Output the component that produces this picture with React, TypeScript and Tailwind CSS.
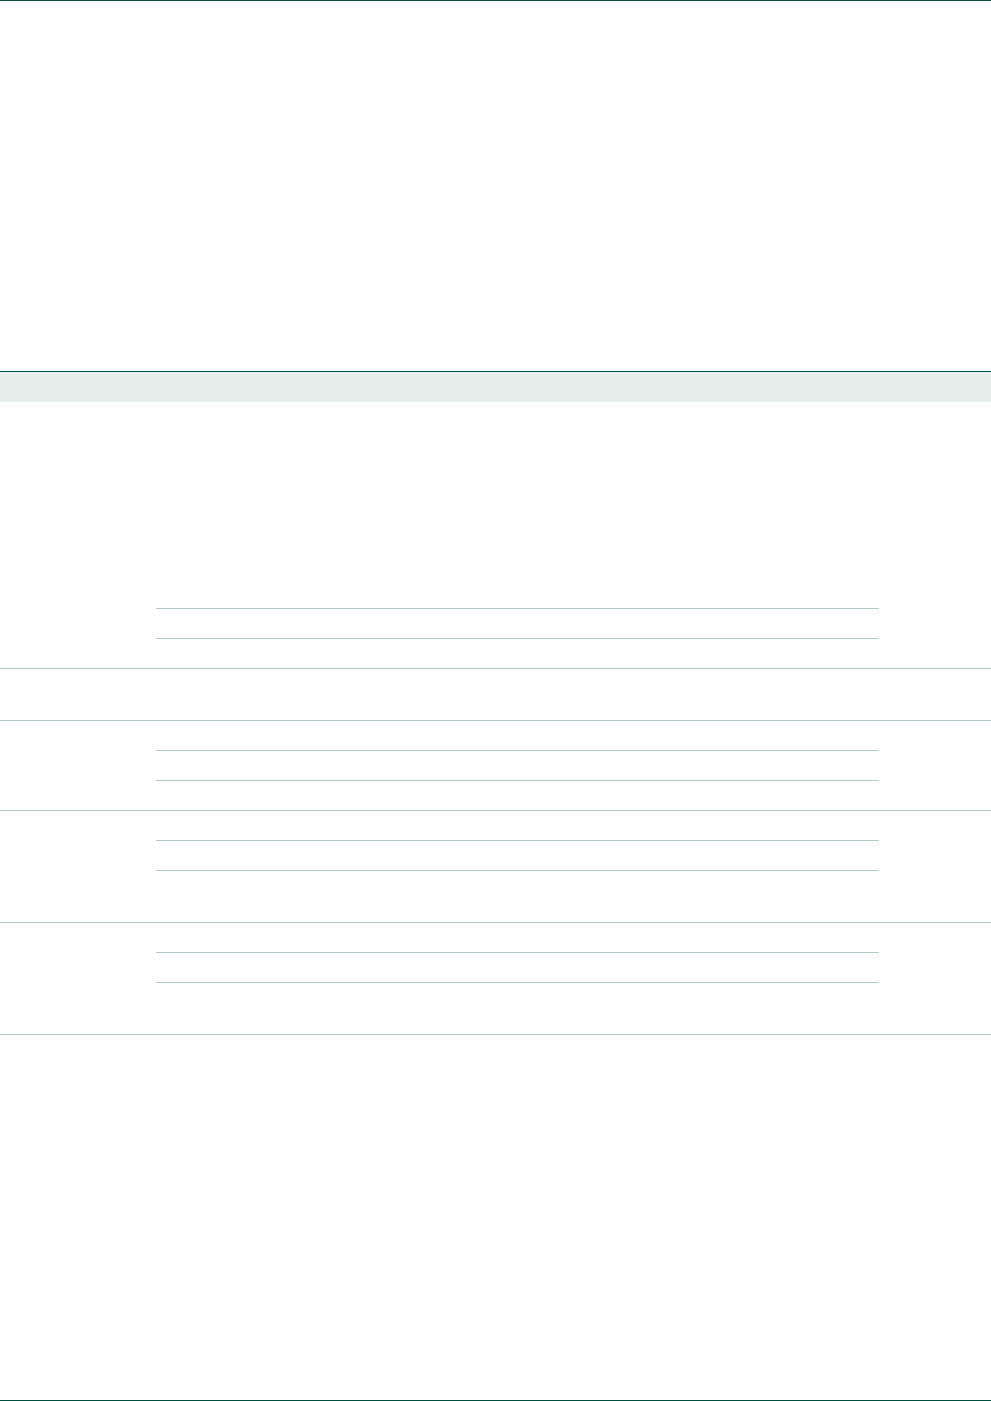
import React from "react";

// Empty tariff table: a header block, a tinted caption band and five grouped rows.
// Each group holds a stack of sub-cells in the middle column.

interface Group {
  cells: number[];
}

const groups: Group[] = [
  { cells: [206, 29, 29] },
  { cells: [51] },
  { cells: [29, 29, 29] },
  { cells: [29, 29, 51] },
  { cells: [29, 29, 51] },
];

const Row: React.FC<Group> = ({ cells }) => {
  return (
    <div className="flex border-b border-[#b3cbc5]">
      <div className="w-[156px] shrink-0" />
      <div className="flex w-[723px] shrink-0 flex-col divide-y divide-[#b3cbc5]">
        {cells.map((h, i) => (
          <div key={i} className="box-content" style={{ height: h }} />
        ))}
      </div>
      <div className="flex-1" />
    </div>
  );
};

export default function App() {
  return (
    <div className="flex min-h-[1401px] w-full flex-col bg-white font-['Liberation_Sans',sans-serif] text-sm text-[#1f2d2a]">
      <div className="h-[371px] border-t border-[#00503f]" />
      <div className="h-[31px] border-t border-[#00503f] bg-[#e6edeb]" />
      <div className="flex flex-col">
        {groups.map((g, i) => (
          <Row key={i} cells={g.cells} />
        ))}
      </div>
      <div className="flex-1" />
      <div className="h-px bg-[#00503f]" />
    </div>
  );
}
